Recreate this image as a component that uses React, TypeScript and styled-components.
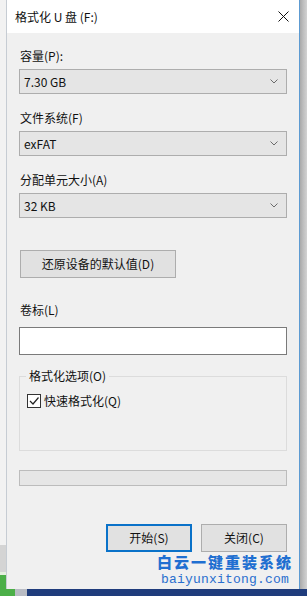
import styled, { createGlobalStyle } from 'styled-components';

const GlobalStyle = createGlobalStyle`
  html, body {
    margin: 0;
    padding: 0;
    background: #c9c9c9;
    overflow: hidden;
  }
  * {
    box-sizing: border-box;
  }
`;

const Desktop = styled.div`
  width: 307px;
  height: 596px;
  display: grid;
  grid-template-columns: 6px 294px 7px;
  grid-template-rows: 589px 7px;
  font-family: 'Noto Sans CJK SC', 'Noto Sans', sans-serif;
  font-size: 12px;
  color: #111;
`;

const LeftStrip = styled.div`
  background: linear-gradient(
    to bottom,
    #f2f2f2 0 545px,
    #d4d4d4 545px 572px,
    #e6efe0 572px 575px,
    #4caf48 575px
  );
`;

const RightShadow = styled.div`
  background: linear-gradient(to right, #a9a9a9 0, #bdbdbd 3px, #d2d2d2 7px);
`;

const BottomStrip = styled.div`
  grid-column: 1 / -1;
  background: linear-gradient(
    to right,
    #4caf48 0 15px,
    #b9bcc4 15px 27px,
    #1f3c7c 27px
  );
`;

const Window = styled.div`
  position: relative;
  display: flex;
  flex-direction: column;
  background: #f0f0f0;
  border-left: 1px solid #c6ccd3;
  border-right: 1px solid #5d9bd2;
`;

const TitleBar = styled.div`
  height: 33px;
  flex: none;
  display: flex;
  align-items: center;
  justify-content: space-between;
  background: #fff;
  padding: 0 10px 0 8px;
`;

const Title = styled.span`
  font-size: 12px;
  line-height: 16px;
  margin-top: 1px;
`;

const CloseIcon = styled.svg`
  width: 11px;
  height: 11px;
`;

const Body = styled.div`
  display: flex;
  flex-direction: column;
  padding: 0 12px;
`;

const Label = styled.div<{ $top: number }>`
  height: 16px;
  line-height: 16px;
  margin-top: ${(p) => p.$top}px;
  padding-left: 1px;
`;

const Select = styled.div`
  height: 25px;
  margin-top: 5px;
  display: flex;
  align-items: center;
  justify-content: space-between;
  background: #e5e5e5;
  border: 1px solid #adadad;
  padding: 0 8px 0 4px;
  line-height: 16px;
`;

const Chevron = styled.svg`
  width: 8px;
  height: 5px;
`;

const Button = styled.div<{ $primary?: boolean }>`
  height: 28px;
  display: flex;
  align-items: center;
  justify-content: center;
  background: #e1e1e1;
  border: ${(p) => (p.$primary ? '2px solid #0a72c9' : '1px solid #adadad')};
  line-height: 16px;
`;

const RestoreButton = styled(Button)`
  width: 156px;
  margin: 32px 0 0 1px;
`;

const TextInput = styled.div`
  height: 28px;
  margin-top: 9px;
  background: #fff;
  border: 1px solid #7a7a7a;
`;

const GroupBox = styled.div`
  position: relative;
  height: 75px;
  margin-top: 21px;
  border: 1px solid #dcdcdc;
  padding: 16px 0 0 7px;
`;

const Legend = styled.span`
  position: absolute;
  top: -9px;
  left: 6px;
  padding: 0 3px;
  background: #f0f0f0;
  line-height: 16px;
`;

const CheckRow = styled.div`
  display: flex;
  align-items: center;
  gap: 3px;
  line-height: 16px;
`;

const CheckBox = styled.svg`
  width: 14px;
  height: 14px;
`;

const Progress = styled.div`
  height: 16px;
  margin-top: 19px;
  background: #e6e6e6;
  border: 1px solid #bcbcbc;
`;

const ButtonRow = styled.div`
  display: flex;
  justify-content: flex-end;
  gap: 9px;
  margin-top: 38px;
`;

const DialogButton = styled(Button)`
  width: 86px;
`;

const Watermark = styled.div`
  position: absolute;
  right: 6px;
  bottom: 1px;
  display: flex;
  flex-direction: column;
  align-items: center;
  color: #1f6fd1;
`;

const WatermarkTitle = styled.div`
  font-family: 'Noto Sans CJK SC', sans-serif;
  font-weight: 900;
  font-size: 15px;
  line-height: 20px;
  letter-spacing: 2px;
`;

const WatermarkUrl = styled.div`
  font-family: 'Liberation Mono', monospace;
  font-size: 13px;
  line-height: 16px;
  letter-spacing: 0.2px;
  color: #2a6fce;
`;

function ChevronDown() {
  return (
    <Chevron viewBox="0 0 8 5">
      <path d="M0.5 0.5 L4 4 L7.5 0.5" fill="none" stroke="#6b6b6b" strokeWidth="1" />
    </Chevron>
  );
}

const fields = [
  { id: 0, label: '容量(P):', value: '7.30 GB', top: 15 },
  { id: 1, label: '文件系统(F)', value: 'exFAT', top: 16 },
  { id: 2, label: '分配单元大小(A)', value: '32 KB', top: 16 }
];

export default function App() {
  return (
    <>
      <GlobalStyle />
      <Desktop>
        <LeftStrip />
        <Window>
          <TitleBar>
            <Title>格式化 U 盘 (F:)</Title>
            <CloseIcon viewBox="0 0 11 11">
              <path d="M0.5 0.5 L10.5 10.5 M10.5 0.5 L0.5 10.5" stroke="#111" strokeWidth="1" />
            </CloseIcon>
          </TitleBar>
          <Body>
            {fields.map(({ id, label, value, top }) => (
              <div key={id}>
                <Label $top={top}>{label}</Label>
                <Select>
                  <span>{value}</span>
                  <ChevronDown />
                </Select>
              </div>
            ))}
            <RestoreButton>还原设备的默认值(D)</RestoreButton>
            <Label $top={24}>卷标(L)</Label>
            <TextInput />
            <GroupBox>
              <Legend>格式化选项(O)</Legend>
              <CheckRow>
                <CheckBox viewBox="0 0 14 14">
                  <rect x="0.5" y="0.5" width="13" height="13" fill="#fff" stroke="#333" />
                  <path d="M3 7 L6 10 L11.5 3.5" fill="none" stroke="#222" strokeWidth="1.2" />
                </CheckBox>
                <span>快速格式化(Q)</span>
              </CheckRow>
            </GroupBox>
            <Progress />
            <ButtonRow>
              <DialogButton $primary>开始(S)</DialogButton>
              <DialogButton>关闭(C)</DialogButton>
            </ButtonRow>
          </Body>
          <Watermark>
            <WatermarkTitle>白云一键重装系统</WatermarkTitle>
            <WatermarkUrl>baiyunxitong.com</WatermarkUrl>
          </Watermark>
        </Window>
        <RightShadow />
        <BottomStrip />
      </Desktop>
    </>
  );
}
